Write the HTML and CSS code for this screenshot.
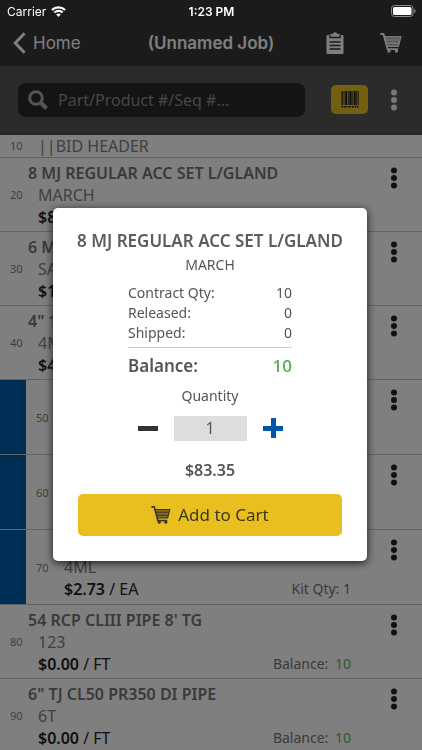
FILE: index.html
```html
<!DOCTYPE html>
<html lang="en">
<head>
<meta charset="utf-8">
<meta name="viewport" content="width=device-width, initial-scale=1">
<title>(Unnamed Job)</title>
<link rel="stylesheet" href="styles.css">
</head>
<body>
<svg class="sprite" aria-hidden="true">
  <symbol id="dots" viewBox="0 0 8 22"><circle cx="4" cy="3.5" r="3"/><circle cx="4" cy="11" r="3"/><circle cx="4" cy="18.5" r="3"/></symbol>
  <symbol id="cart" viewBox="0 0 22 20">
    <path d="M.3 1h3.2l4 15.2H18" fill="none" stroke="currentColor" stroke-width="1.8"/>
    <path d="M4.200 3.600h17l-2.600 10H6.800z" fill-opacity=".6"/>
    <path d="M4.200 3.800h16.600l-2.400 9.600H6.800M5.500 7h14.500M6.300 10.200h13" fill="none" stroke="currentColor" stroke-width="1.200"/>
    <circle cx="9" cy="18" r="1.7"/><circle cx="16.4" cy="18" r="1.7"/>
  </symbol>
</svg>
<div class="status">
  <span class="carrier">Carrier
    <svg width="15" height="11" viewBox="0 0 15 11" fill="none" stroke="currentColor" stroke-width="2.1"><path d="M.9 4.1a9.4 9.4 0 0 1 13.2 0M3.3 6.6a6 6 0 0 1 8.4 0"/><path d="M7.5 10.9 5.2 8.5a3.3 3.3 0 0 1 4.6 0z" fill="currentColor" stroke="none"/></svg>
  </span>
  <span class="clock">1:23 PM</span>
  <svg class="battery" width="25" height="12" viewBox="0 0 25 12"><rect x=".5" y=".5" width="21.500" height="11" rx="3" fill="none" stroke="#8c8c8c"/><rect x="2" y="2" width="18.500" height="8" rx="1.600" fill="#fff"/><path d="M23.200 4v4q1.400-.6 1.400-2t-1.400-2z" fill="#8c8c8c"/></svg>
</div>
<div class="app">
  <header class="nav">
    <a class="back" href="#"><svg width="13" height="22" viewBox="0 0 13 22" fill="none" stroke="currentColor" stroke-width="3"><path d="M11.600 1.200 2.200 11l9.400 9.800"/></svg>Home</a>
    <h1>(Unnamed Job)</h1>
    <div class="actions">
      <button aria-label="Jobs"><svg width="18" height="22" viewBox="0 0 18 22"><path fill="currentColor" d="M1.500 3H4V2h2.600a2.500 2.500 0 0 1 4.800 0H14v1h2.500q1 0 1 1v17q0 1-1 1h-15q-1 0-1-1V4q0-1 1-1z"/><path d="M4 3v2.500h10V3M3.500 10h11M3.500 13.500h11M3.500 17h11" fill="none" stroke="#363636" stroke-width="1.400"/></svg></button>
      <button aria-label="Cart"><svg class="fill" width="22" height="20"><use href="#cart"/></svg></button>
    </div>
  </header>
  <div class="search">
    <label class="field"><svg width="20" height="20" viewBox="0 0 20 20" fill="none" stroke="currentColor"><circle cx="8" cy="8" r="6.300" stroke-width="3"/><path d="m12.500 12.500 6 6" stroke-width="4"/></svg><input type="text" aria-label="Search" placeholder="Part/Product #/Seq #..."></label>
    <button class="scan" aria-label="Scan barcode"><svg width="18" height="17" viewBox="0 0 18 17" fill="#1c1c1c"><path d="M.5 0h1.300v14H.5zM2.600 0h.8v14h-.8zM4.200 0h2v14h-2zM7 0h.7v14H7zM8.400 0h2.200v14H8.400zM11.400 0h.8v14h-.8zM12.900 0h1.800v14h-1.800zM15.300 0h.7v14h-.7zM16.600 0h1v14h-1z"/><path d="M.5 15.800h17" stroke="#1c1c1c" stroke-width="1.600" stroke-dasharray="1.800 .8"/></svg></button>
    <button class="more light" aria-label="More"><svg width="8" height="22"><use href="#dots"/></svg></button>
  </div>
  <ul class="list">
    <li class="row heading"><span class="seq">10</span><p class="note">||BID HEADER</p></li>
    <li class="row"><span class="seq">20</span><div class="item"><h2>8 MJ REGULAR ACC SET L/GLAND</h2><p>MARCH</p><p class="price"><b>$8</b></p></div><button class="more" aria-label="More"><svg width="8" height="22"><use href="#dots"/></svg></button></li>
    <li class="row"><span class="seq">30</span><div class="item"><h2>6 MJ</h2><p>SA</p><p class="price"><b>$1</b></p></div><button class="more" aria-label="More"><svg width="8" height="22"><use href="#dots"/></svg></button></li>
    <li class="row"><span class="seq">40</span><div class="item"><h2>4" 1</h2><p>4ML</p><p class="price"><b>$4</b></p></div><button class="more" aria-label="More"><svg width="8" height="22"><use href="#dots"/></svg></button></li>
    <li class="row kit"><span class="seq">50</span><div class="item"></div><button class="more" aria-label="More"><svg width="8" height="22"><use href="#dots"/></svg></button></li>
    <li class="row kit"><span class="seq">60</span><div class="item"></div><button class="more" aria-label="More"><svg width="8" height="22"><use href="#dots"/></svg></button></li>
    <li class="row kit"><span class="seq">70</span><div class="item"><h2></h2><p>4ML</p><p class="price"><span><b>$2.73</b> / EA</span><span class="qty">Kit Qty: 1</span></p></div><button class="more" aria-label="More"><svg width="8" height="22"><use href="#dots"/></svg></button></li>
    <li class="row"><span class="seq">80</span><div class="item"><h2>54 RCP CLIII PIPE 8' TG</h2><p>123</p><p class="price"><span><b>$0.00</b> / FT</span><span class="qty">Balance: <em>10</em></span></p></div><button class="more" aria-label="More"><svg width="8" height="22"><use href="#dots"/></svg></button></li>
    <li class="row"><span class="seq">90</span><div class="item"><h2>6" TJ CL50 PR350 DI PIPE</h2><p>6T</p><p class="price"><span><b>$0.00</b> / FT</span><span class="qty">Balance: <em>10</em></span></p></div><button class="more" aria-label="More"><svg width="8" height="22"><use href="#dots"/></svg></button></li>
  </ul>
</div>
<div class="overlay">
  <section class="modal" role="dialog" aria-labelledby="item-name">
    <h2 id="item-name">8 MJ REGULAR ACC SET L/GLAND</h2>
    <p class="sub">MARCH</p>
    <dl class="facts">
      <div><dt>Contract Qty:</dt><dd>10</dd></div>
      <div><dt>Released:</dt><dd>0</dd></div>
      <div><dt>Shipped:</dt><dd>0</dd></div>
      <div class="total"><dt>Balance:</dt><dd>10</dd></div>
    </dl>
    <label class="sub" for="qty">Quantity</label>
    <div class="stepper">
      <button class="minus" aria-label="Decrease"><svg width="20" height="20" viewBox="0 0 20 20"><path d="M0 8h20v5H0z" fill="currentColor"/></svg></button>
      <input id="qty" type="text" inputmode="numeric" value="1">
      <button class="plus" aria-label="Increase"><svg width="20" height="20" viewBox="0 0 20 20"><path d="M8 0h5v8h7v5h-7v7H8v-7H0V8h8z" fill="currentColor"/></svg></button>
    </div>
    <p class="amount">$83.35</p>
    <button class="add"><svg class="fill" width="20" height="18"><use href="#cart"/></svg>Add to Cart</button>
  </section>
</div>
</body>
</html>
```
FILE: styles.css
```css
* { box-sizing: border-box; }
body, h1, h2, p, ul, dl, dd { margin: 0; padding: 0; }
body {
  height: 100vh;
  overflow: hidden;
  background: #fff;
  color: #808080;
  font-family: "Noto Sans", "Open Sans", sans-serif;
  font-size: 16px;
}
button, input { font: inherit; color: inherit; border: 0; background: none; padding: 0; }
button { display: flex; align-items: center; justify-content: center; }
svg { display: block; flex: none; }
.sprite { position: absolute; width: 0; height: 0; }
.fill { fill: currentColor; }

.status {
  position: absolute;
  inset: 0 0 auto;
  z-index: 3;
  display: grid;
  grid-template-columns: 1fr auto 1fr;
  align-items: center;
  height: 22px;
  padding: 0 6px 0 7px;
  color: #fff;
  font: 12px "Inter", sans-serif;
}
.carrier { display: flex; align-items: center; gap: 5px; }
.clock { font-weight: 600; }
.battery { justify-self: end; }

.nav {
  display: grid;
  grid-template-columns: 1fr auto 1fr;
  align-items: center;
  height: 66px;
  padding: 20px 13px 0;
  background: #363636;
  color: #fff;
  font-family: "Inter", sans-serif;
}
.back { display: flex; align-items: center; gap: 7px; color: inherit; font-size: 17px; text-decoration: none; }
.nav h1 { font-size: 17px; font-weight: 600; }
.actions { display: flex; justify-content: flex-end; gap: 36px; padding-right: 7px; }

.search {
  display: flex;
  align-items: center;
  height: 69px;
  padding: 0 16px 0 18px;
  background: #575757;
  border-bottom: 2px solid #484848;
}
.field {
  display: flex;
  flex: 1;
  align-items: center;
  gap: 10px;
  min-width: 0;
  height: 34px;
  padding: 0 10px;
  border-radius: 8px;
  background: #282828;
  color: #a8a8a8;
}
.field input { flex: 1; min-width: 0; outline: 0; }
.field input::placeholder { color: #8e8e8e; opacity: 1; }
.scan { width: 37px; height: 29px; margin: 0 14px 0 26px; border-radius: 5px; background: #e8bf1e; }
.more { width: 24px; height: 22px; fill: #222; }
.light { fill: #eee; }

.list { list-style: none; }
.row {
  display: flex;
  align-items: flex-start;
  height: 74px;
  padding: 4px 16px 3px 0;
  border-bottom: 1px solid #c8c8c8;
  line-height: 22px;
}
.row .more { margin-top: 5px; }
.seq { align-self: center; width: 28px; padding-left: 10px; font-size: 11px; }
.heading { height: 23px; padding: 0; }
.note { padding-left: 10px; }
.kit { height: 75px; padding-left: 26px; background: linear-gradient(90deg, #005eaa 26px, transparent 26px); }
.item { flex: 1; min-width: 0; }
.item h2 { min-height: 22px; color: #747474; font-size: 16px; font-weight: 600; }
.item p { padding-left: 10px; }
.item .price { display: flex; justify-content: space-between; padding-right: 31px; color: #222; }
.price b { font-weight: 600; }
.qty { color: #747474; font-size: 14px; }
.qty em { margin-left: 3px; color: #5cb85c; font-style: normal; }

.overlay {
  position: fixed;
  inset: 0;
  z-index: 2;
  display: flex;
  align-items: center;
  justify-content: center;
  padding: 18px 55px 0 53px;
  background: rgba(0, 0, 0, .5);
}
.modal {
  display: flex;
  flex: 1;
  flex-direction: column;
  align-items: center;
  max-width: 400px;
  padding: 21px 0 25px;
  border-radius: 5px;
  background: #fff;
  box-shadow: 0 2px 8px rgba(0, 0, 0, .8);
  color: #555;
}
.modal h2 { color: #5c5c5c; font-size: 17px; font-weight: 600; line-height: 24px; white-space: nowrap; }
.sub { font-size: 14px; line-height: 24px; }
.facts { width: 164px; margin: 6px 0; font-size: 14px; line-height: 20px; }
.facts div { display: flex; justify-content: space-between; }
.facts .total { margin-top: 4px; padding-top: 6px; border-top: 1px solid #ccc; font-size: 17px; font-weight: 600; line-height: 24px; }
.facts .total dd { color: #4cae4c; font-weight: 500; }
.stepper { display: flex; align-items: center; gap: 16px; margin: 8px 0 18px; }
.stepper input { width: 73px; height: 25px; background: #ddd; text-align: center; }
.minus { color: #333; }
.plus { color: #0057a8; }
.amount { margin-bottom: 13px; font-weight: 600; line-height: 22px; }
.add { gap: 7px; align-self: stretch; height: 42px; margin: 0 25px; border-radius: 5px; background: #e8bf1e; color: #3c3820; font-size: 17px; }
```
